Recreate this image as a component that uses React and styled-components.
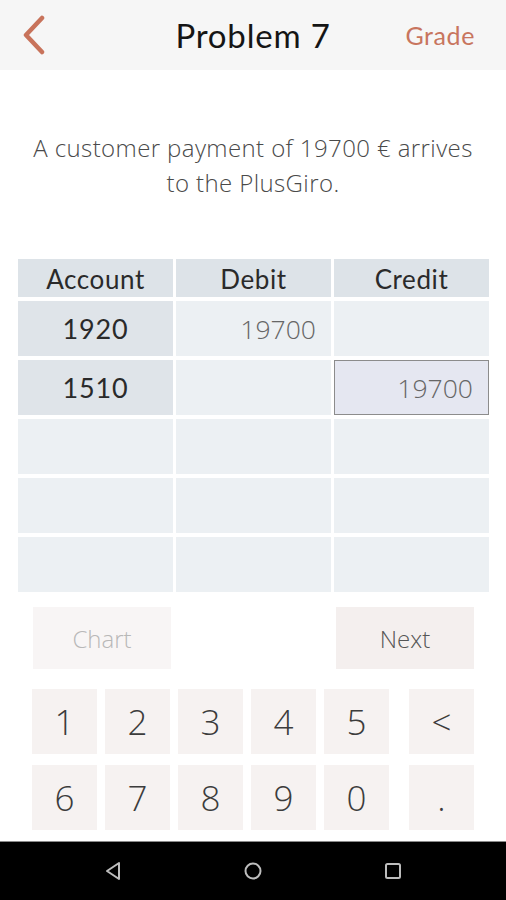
import React from 'react';
import styled, { createGlobalStyle } from 'styled-components';

const GlobalStyle = createGlobalStyle`
  html, body {
    margin: 0;
    padding: 0;
    background: #ffffff;
  }
  body {
    font-family: "Open Sans", "Noto Sans", sans-serif;
  }
`;

const Screen = styled.div`
  width: 506px;
  height: 900px;
  display: flex;
  flex-direction: column;
  background: #ffffff;
  overflow: hidden;
`;

const Header = styled.header`
  height: 70px;
  flex-shrink: 0;
  background: #f6f6f6;
  display: grid;
  grid-template-columns: 120px 1fr 120px;
  align-items: center;
`;

const BackButton = styled.button`
  border: none;
  background: none;
  padding: 0 0 0 20px;
  display: flex;
  align-items: center;
  height: 100%;
  cursor: pointer;
`;

const Title = styled.h1`
  margin: 0;
  text-align: center;
  font-family: Lato, "Noto Sans", sans-serif;
  font-weight: 400;
  font-size: 33px;
  color: #151515;
  letter-spacing: 0.8px;
`;

const GradeButton = styled.button`
  border: none;
  background: none;
  justify-self: end;
  padding: 0 31px 0 0;
  font-family: Lato, "Noto Sans", sans-serif;
  font-size: 25px;
  letter-spacing: 0.6px;
  color: #c8755e;
  cursor: pointer;
`;

const Question = styled.p`
  margin: 60px 0 0;
  padding: 0 10px;
  text-align: center;
  font-weight: 300;
  font-size: 24px;
  letter-spacing: 0.4px;
  line-height: 35px;
  color: #4a4a4a;
`;

const Table = styled.div`
  margin: 59px 17px 0 18px;
  display: grid;
  grid-template-columns: repeat(3, 155px);
  grid-template-rows: 38px repeat(5, 55px);
  column-gap: 3px;
  row-gap: 4px;
`;

const HeadCell = styled.div`
  background: #dde3e8;
  display: flex;
  align-items: center;
  justify-content: center;
  padding-top: 2px;
  font-family: Lato, "Noto Sans", sans-serif;
  font-size: 26px;
  letter-spacing: 0.6px;
  color: #2a2a2a;
`;

const Cell = styled.div`
  box-sizing: border-box;
  display: flex;
  align-items: center;
  justify-content: ${(p) => (p.$account ? 'center' : 'flex-end')};
  padding-right: ${(p) => (p.$account ? '0' : '15px')};
  background: ${(p) =>
    p.$selected ? '#e5e7f1' : p.$account && p.children ? '#dfe4e9' : '#ecf0f3'};
  border: ${(p) => (p.$selected ? '1.5px solid #8c8c8c' : 'none')};
  font-family: ${(p) => (p.$account ? 'Lato, "Noto Sans", sans-serif' : '"Open Sans", sans-serif')};
  font-weight: ${(p) => (p.$account ? 400 : 300)};
  font-size: ${(p) => (p.$account ? '27px' : '26.5px')};
  letter-spacing: ${(p) => (p.$account ? '0.8px' : '0')};
  color: ${(p) => (p.$account ? '#2a2a2a' : '#666')};
`;

const ActionRow = styled.div`
  margin: 15px 32px 0 33px;
  display: flex;
  justify-content: space-between;
`;

const ActionButton = styled.button`
  width: 138px;
  height: 62px;
  border: none;
  background: ${(p) => (p.$disabled ? '#f8f5f5' : '#f4efee')};
  font-family: "Open Sans", sans-serif;
  font-weight: 300;
  font-size: 24px;
  color: ${(p) => (p.$disabled ? '#b8b8b8' : '#555')};
  cursor: pointer;
`;

const Keypad = styled.div`
  margin: 20px 0 0 32px;
  display: grid;
  grid-template-columns: repeat(5, 65px) 4px 65px;
  grid-template-rows: repeat(2, 65px);
  column-gap: 8px;
  row-gap: 11px;
`;

const Key = styled.button`
  border: none;
  background: #f6f2f1;
  padding: 0;
  font-family: "Open Sans", sans-serif;
  font-weight: 300;
  font-size: 35px;
  color: #3c3c3c;
  cursor: pointer;
  grid-column: ${(p) => (p.$side ? '7' : 'auto')};
`;

const NavBar = styled.nav`
  margin-top: auto;
  height: 58px;
  flex-shrink: 0;
  background: #000;
  border-top: 1px solid #8a8a8a;
  display: flex;
  align-items: center;
  justify-content: center;
  gap: 120px;
`;

const NavIcon = styled.svg`
  width: 20px;
  height: 20px;
`;

const rows = [
  { account: '1920', debit: '19700', credit: '' },
  { account: '1510', debit: '', credit: '19700', selected: 'credit' },
  { account: '', debit: '', credit: '' },
  { account: '', debit: '', credit: '' },
  { account: '', debit: '', credit: '' },
];

const App = () => {
  return (
    <Screen>
      <GlobalStyle />
      <Header>
        <BackButton aria-label="Back">
          <svg width="28" height="40" viewBox="0 0 28 40">
            <path
              d="M22 3 L6 20 L22 37"
              fill="none"
              stroke="#c8735b"
              strokeWidth="4.5"
              strokeLinecap="round"
              strokeLinejoin="round"
            />
          </svg>
        </BackButton>
        <Title>Problem 7</Title>
        <GradeButton>Grade</GradeButton>
      </Header>

      <Question>
        A customer payment of 19700 € arrives
        <br />
        to the PlusGiro.
      </Question>

      <Table>
        <HeadCell>Account</HeadCell>
        <HeadCell>Debit</HeadCell>
        <HeadCell>Credit</HeadCell>
        {rows.map((r, i) => (
          <React.Fragment key={i}>
            <Cell $account>{r.account}</Cell>
            <Cell $selected={r.selected === 'debit'}>{r.debit}</Cell>
            <Cell $selected={r.selected === 'credit'}>{r.credit}</Cell>
          </React.Fragment>
        ))}
      </Table>

      <ActionRow>
        <ActionButton $disabled>Chart</ActionButton>
        <ActionButton>Next</ActionButton>
      </ActionRow>

      <Keypad>
        {['1', '2', '3', '4', '5'].map((k) => (
          <Key key={k}>{k}</Key>
        ))}
        <Key $side>&lt;</Key>
        {['6', '7', '8', '9', '0'].map((k) => (
          <Key key={k}>{k}</Key>
        ))}
        <Key $side>.</Key>
      </Keypad>

      <NavBar>
        <NavIcon viewBox="0 0 20 20">
          <path d="M16 2 L4 10 L16 18 Z" fill="none" stroke="#bdbdbd" strokeWidth="2" strokeLinejoin="round" />
        </NavIcon>
        <NavIcon viewBox="0 0 20 20">
          <circle cx="10" cy="10" r="7.5" fill="none" stroke="#bdbdbd" strokeWidth="2" />
        </NavIcon>
        <NavIcon viewBox="0 0 20 20">
          <rect x="3" y="3" width="14" height="14" rx="1.5" fill="none" stroke="#bdbdbd" strokeWidth="2" />
        </NavIcon>
      </NavBar>
    </Screen>
  );
};

export default App;
